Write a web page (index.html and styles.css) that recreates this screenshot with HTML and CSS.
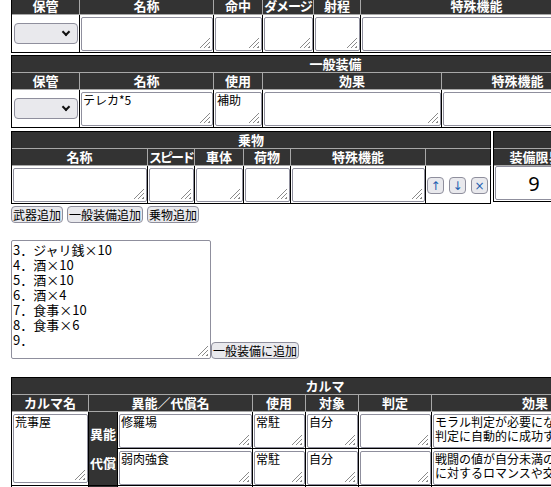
FILE: index.html
```html
<!DOCTYPE html>
<html lang="ja">
<head>
<meta charset="utf-8">
<title>装備</title>
<link rel="stylesheet" href="styles.css">
</head>
<body>
<div class="page">

  <!-- 武器 -->
  <div class="sheet g-weapon">
    <div class="h">保管</div><div class="h">名称</div><div class="h">命中</div><div class="h tight1">ダメージ</div><div class="h">射程</div><div class="h">特殊機能</div><div class="h end"></div>
    <div class="d mid"><span class="sel"><select><option></option></select></span></div>
    <div class="d"><textarea></textarea></div>
    <div class="d"><textarea></textarea></div>
    <div class="d"><textarea></textarea></div>
    <div class="d"><textarea></textarea></div>
    <div class="d"><textarea></textarea></div>
    <div class="d ops"><button class="mini">↑</button><button class="mini">↓</button><button class="mini">×</button></div>
  </div>

  <!-- 一般装備 -->
  <div class="sheet g-gear">
    <div class="t">一般装備</div>
    <div class="h">保管</div><div class="h">名称</div><div class="h">使用</div><div class="h">効果</div><div class="h">特殊機能</div><div class="h end"></div>
    <div class="d mid"><span class="sel"><select><option></option></select></span></div>
    <div class="d"><textarea>テレカ*5</textarea></div>
    <div class="d"><textarea>補助</textarea></div>
    <div class="d"><textarea></textarea></div>
    <div class="d"><textarea></textarea></div>
    <div class="d ops"><button class="mini">↑</button><button class="mini">↓</button><button class="mini">×</button></div>
  </div>

  <div class="row3">
    <!-- 乗物 -->
    <div class="sheet g-vehicle">
      <div class="t">乗物</div>
      <div class="h">名称</div><div class="h tight2">スピード</div><div class="h">車体</div><div class="h">荷物</div><div class="h">特殊機能</div><div class="h end"></div>
      <div class="d"><textarea></textarea></div>
      <div class="d"><textarea></textarea></div>
      <div class="d"><textarea></textarea></div>
      <div class="d"><textarea></textarea></div>
      <div class="d"><textarea></textarea></div>
      <div class="d ops"><button class="mini">↑</button><button class="mini">↓</button><button class="mini">×</button></div>
    </div>
    <!-- 装備限界 -->
    <div class="sheet g-limit">
      <div class="t"></div>
      <div class="h end">装備限界</div>
      <div class="d lim"><input class="limit" type="text" value="9"></div>
    </div>
  </div>

  <div class="addbtns">
    <button class="btn">武器追加</button>
    <button class="btn">一般装備追加</button>
    <button class="btn">乗物追加</button>
  </div>

  <div class="bulk">
    <textarea class="big">3．ジャリ銭×10
4．酒×10
5．酒×10
6．酒×4
7．食事×10
8．食事×6
9．</textarea><button class="btn">一般装備に追加</button>
  </div>

  <!-- カルマ -->
  <div class="sheet g-karma">
    <div class="t">カルマ</div>
    <div class="h">カルマ名</div><div class="h span2">異能／代償名</div><div class="h">使用</div><div class="h">対象</div><div class="h">判定</div><div class="h end">効果</div>

    <div class="d kname"><textarea class="tall">荒事屋</textarea></div>
    <div class="lab"><span>異能</span><span>代償</span></div>
    <div class="d"><textarea>修羅場</textarea></div>
    <div class="d"><textarea>常駐</textarea></div>
    <div class="d"><textarea>自分</textarea></div>
    <div class="d"><textarea></textarea></div>
    <div class="d"><textarea>モラル判定が必要になった時、その
判定に自動的に成功する。</textarea></div>

    <div class="d"><textarea>弱肉強食</textarea></div>
    <div class="d"><textarea>常駐</textarea></div>
    <div class="d"><textarea>自分</textarea></div>
    <div class="d"><textarea></textarea></div>
    <div class="d"><textarea>戦闘の値が自分未満のキャラクター
に対するロマンスや交流に失敗。</textarea></div>

    <div class="d kname"><textarea class="tall"></textarea></div>
    <div class="lab"><span>異能</span><span>代償</span></div>
    <div class="d"><textarea></textarea></div>
    <div class="d"><textarea></textarea></div>
    <div class="d"><textarea></textarea></div>
    <div class="d"><textarea></textarea></div>
    <div class="d"><textarea></textarea></div>
  </div>

</div>
</body>
</html>
```

FILE: styles.css
```css
html, body {
  margin: 0;
  padding: 0;
  overflow: hidden;
  background: #fff;
}

body {
  display: flow-root;
  font-family: "Noto Sans CJK JP", sans-serif;
  font-size: 13px;
  color: #000;
}

.page {
  padding-left: 11px;
  margin-top: -3px;
  width: 900px;
}

/* ---------- sheets (grid tables) ---------- */
.sheet {
  display: grid;
  width: max-content;
  border-left: 1px solid #000;
  border-top: 1px solid #000;
}

.g-weapon {
  grid-template-columns: 68px 134px 49px 51px 47px 232px 66px;
  grid-template-rows: 17px 38px;
}

.g-gear {
  grid-template-columns: 68px 134px 49px 179px 152px 66px;
  grid-template-rows: 17px 17px 38px;
  margin-top: 2px;
}

.g-vehicle {
  grid-template-columns: 136px 47px 49px 47px 135px 65px;
  grid-template-rows: 17px 17px 38px;
}

.g-limit {
  grid-template-columns: 84px;
  grid-template-rows: 17px 17px 36px;
}

.g-karma {
  grid-template-columns: 77px 29px 135px 53px 53px 73px 207px;
  grid-template-rows: 17px 17px 37px 37px 37px 37px;
  margin-top: 18px;
}

.t {
  grid-column: 1 / -1;
  background: #333;
  color: #fff;
  font-weight: bold;
  font-size: 13px;
  line-height: 15px;
  text-align: center;
  border-right: 1px solid #000;
  border-bottom: 1px solid #a8a8a8;
  white-space: nowrap;
}

.h {
  background: #333;
  color: #fff;
  font-weight: bold;
  font-size: 13px;
  line-height: 15px;
  text-align: center;
  border-right: 1px solid #a8a8a8;
  border-bottom: 1px solid #a8a8a8;
  white-space: nowrap;
  overflow: hidden;
}

.h.end { border-right-color: #000; }
.h.span2 { grid-column: span 2; }
.h.tight1 { letter-spacing: -1px; }
.h.tight2 { letter-spacing: -2px; }

.d {
  border-right: 1px solid #000;
  border-bottom: 1px solid #000;
  padding: 2px 0 1px 1px;
  min-width: 0;
}

.d.mid {
  display: flex;
  align-items: center;
  padding: 0 0 0 1px;
}

.row3 {
  display: flex;
  align-items: flex-start;
  gap: 2px;
  margin-top: 3px;
}

/* ---------- form controls ---------- */
textarea {
  box-sizing: border-box;
  display: block;
  width: 100%;
  height: 34px;
  margin: 0;
  border: 1px solid #8f8f9d;
  border-radius: 2px;
  padding: 0 1px;
  font-family: "Noto Sans CJK JP", sans-serif;
  font-size: 12px;
  line-height: 14px;
  color: #000;
  resize: none;
  overflow: hidden;
  background:
    linear-gradient(135deg, #fff 0 50%, transparent 50%) right 2px bottom 2px / 11px 11px no-repeat,
    repeating-linear-gradient(135deg, transparent 0 2px, #8a8a8a 2px 3px) right 2px bottom 2px / 11px 11px no-repeat,
    #fff;
}

.sel {
  display: block;
  position: relative;
  width: 64px;
  height: 21px;
  margin-left: 1px;
}

.sel select {
  appearance: none;
  -webkit-appearance: none;
  display: block;
  width: 64px;
  height: 21px;
  margin: 0;
  background: #e9e9ed;
  border: 1px solid #8f8f9d;
  border-radius: 4px;
  font-size: 12px;
}

.sel::after {
  content: "";
  position: absolute;
  right: 9px;
  top: 6px;
  width: 4px;
  height: 4px;
  border-right: 2px solid #111;
  border-bottom: 2px solid #111;
  transform: rotate(45deg);
  pointer-events: none;
}

.btn {
  box-sizing: border-box;
  height: 17px;
  margin: 0;
  padding: 0 1px;
  background: #e9e9ed;
  border: 1px solid #8f8f9d;
  border-radius: 4px;
  font-family: "Noto Sans CJK JP", sans-serif;
  font-size: 12px;
  line-height: 14px;
  color: #000;
}

.d.ops {
  display: flex;
  align-items: flex-end;
  gap: 5px;
  padding: 0 0 9px 1px;
  overflow: hidden;
}

.mini {
  box-sizing: border-box;
  flex: none;
  width: 17px;
  height: 17px;
  margin: 0;
  padding: 0;
  background: #e9e9ed;
  border: 1px solid #8f8f9d;
  border-radius: 4px;
  font-family: "DejaVu Sans", sans-serif;
  font-size: 12px;
  line-height: 14px;
  color: #1d5fb0;
}

.d.lim {
  padding: 0 0 1px 1px;
}

.limit {
  box-sizing: border-box;
  display: block;
  width: 100%;
  height: 34px;
  margin: 0;
  border: 1px solid #8f8f9d;
  border-radius: 2px;
  padding: 0 4px 0 0;
  text-align: center;
  font-family: "Noto Sans", sans-serif;
  font-size: 20px;
  color: #000;
  background: #fff;
}

.addbtns {
  display: flex;
  gap: 4px;
  margin-top: 2px;
}

.bulk {
  display: flex;
  align-items: flex-end;
  margin-top: 17px;
}

textarea.big {
  width: 200px;
  height: 119px;
  font-size: 13px;
  line-height: 15px;
  padding: 1px 1px;
}

/* karma specifics */
.kname {
  grid-row: span 2;
}

textarea.tall { height: 69px; }

.lab {
  grid-row: span 2;
  background: #333;
  color: #fff;
  font-weight: bold;
  font-size: 13px;
  line-height: 29px;
  padding-bottom: 2px;
  border-right: 1px solid #000;
  border-bottom: 1px solid #000;
  display: flex;
  flex-direction: column;
  align-items: center;
  justify-content: center;
  white-space: nowrap;
}
```
